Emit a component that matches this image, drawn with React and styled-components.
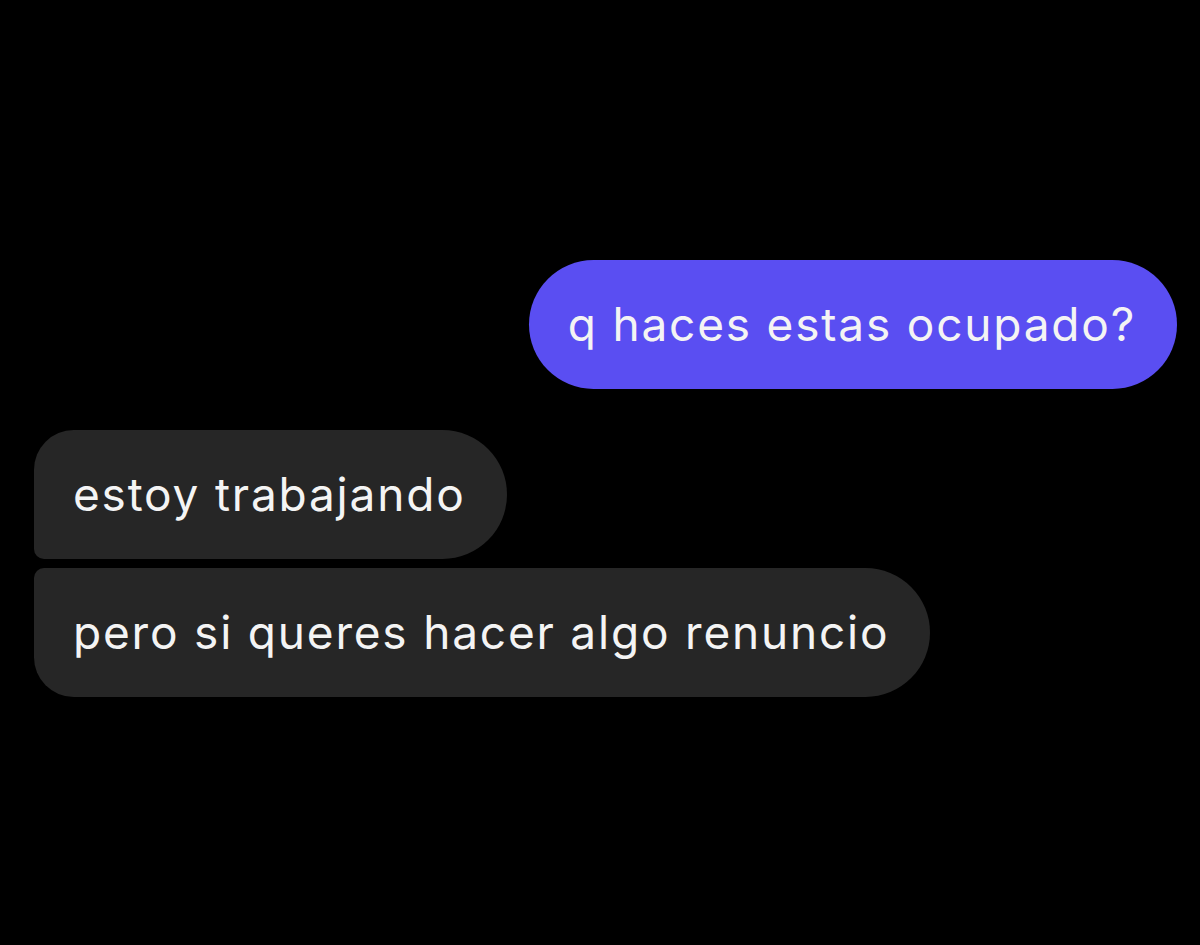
import styled, { createGlobalStyle } from "styled-components";

const GlobalStyle = createGlobalStyle`
  html, body {
    margin: 0;
    padding: 0;
    background: #000;
  }
`;

const messages = [
  { id: 1, text: "q haces estas ocupado?", mine: true },
  { id: 2, text: "estoy trabajando", mine: false, first: true },
  { id: 3, text: "pero si queres hacer algo renuncio", mine: false, last: true },
];

export default function App() {
  return (
    <>
      <GlobalStyle />
      <Screen>
        <Thread>
          {messages.map((m) => (
            <Bubble
              key={m.id}
              $mine={m.mine}
              $first={m.first}
              $last={m.last}
            >
              {m.text}
            </Bubble>
          ))}
        </Thread>
      </Screen>
    </>
  );
}

const Screen = styled.div`
  width: 1200px;
  height: 945px;
  background: #000;
  overflow: hidden;
  box-sizing: border-box;
  padding: 260px 23px 0 34px;
`;

const Thread = styled.div`
  display: flex;
  flex-direction: column;
  gap: 9px;
`;

const Bubble = styled.div`
  display: flex;
  align-items: center;
  box-sizing: border-box;
  height: 129px;
  padding: 0 41px 2px 39px;
  align-self: ${(p) => (p.$mine ? "flex-end" : "flex-start")};
  margin-bottom: ${(p) => (p.$mine ? "32px" : "0")};
  background: ${(p) => (p.$mine ? "#5a4ef2" : "#262626")};
  color: #f4f4f4;
  font-family: Inter, "Liberation Sans", Arial, sans-serif;
  font-size: 46px;
  letter-spacing: 1.8px;
  white-space: nowrap;
  border-radius: ${(p) =>
    p.$mine
      ? "65px"
      : p.$first
      ? "40px 65px 65px 10px"
      : p.$last
      ? "10px 65px 65px 40px"
      : "10px 65px 65px 10px"};
`;
